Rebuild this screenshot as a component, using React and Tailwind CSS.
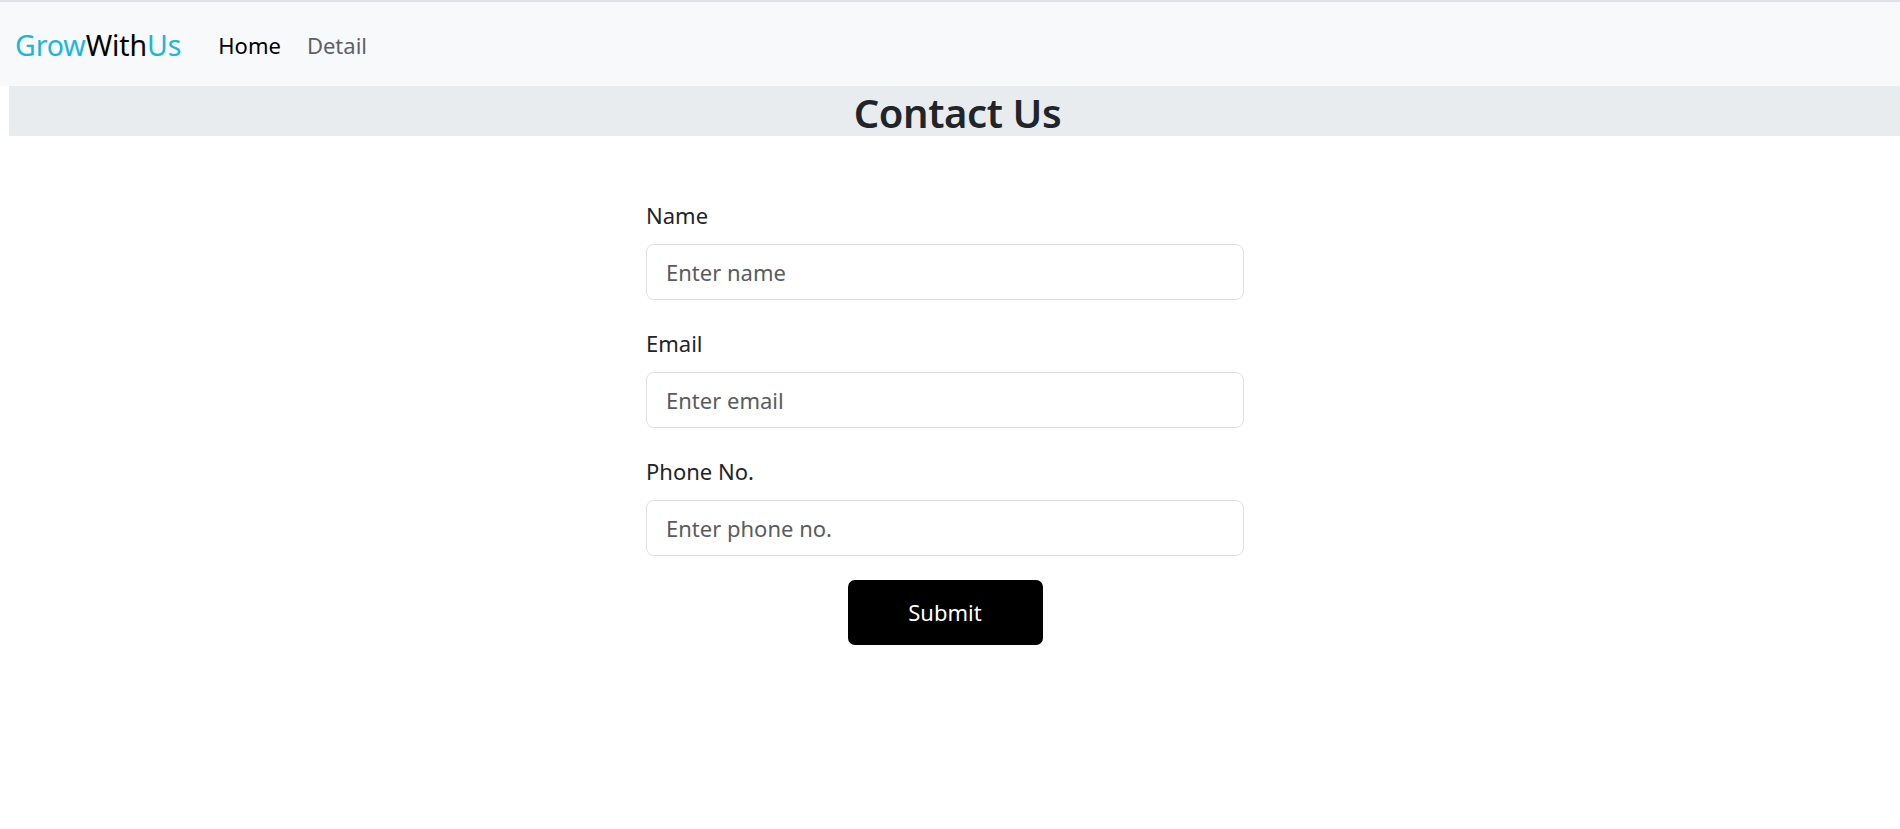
import React from 'react';

const fields = [
  { label: 'Name', placeholder: 'Enter name', type: 'text' },
  { label: 'Email', placeholder: 'Enter email', type: 'email' },
  { label: 'Phone No.', placeholder: 'Enter phone no.', type: 'tel' },
];

export default function App() {
  return (
    <div className="min-h-screen bg-white text-[#212529] font-['Noto_Sans',_'Open_Sans',_sans-serif]">
      <div className="h-[2px] bg-[#dee2e6]" />
      <nav className="h-[84px] bg-[#f8f9fa] flex items-center pl-[15px] pt-[2px]">
        <a href="#" className="text-[28.5px] leading-none tracking-[-0.1px]">
          <span className="text-[#21b5dd]">Grow</span>
          <span className="text-black">With</span>
          <span className="text-[#21b5dd]">Us</span>
        </a>
        <div className="flex items-center gap-[26px] ml-[37px] text-[22px]">
          <a href="#" className="text-black">Home</a>
          <a href="#" className="text-[#5c6166]">Detail</a>
        </div>
      </nav>

      <div className="ml-[9px] h-[50px] bg-[#e9ecef] flex items-center justify-center pt-[3px]">
        <h1 className="text-[40px] font-semibold leading-none tracking-[-0.4px] ml-[6px]">Contact Us</h1>
      </div>

      <div className="flex justify-center pr-[10px] pt-[64px]">
        <form className="w-[598px] flex flex-col" onSubmit={(e) => e.preventDefault()}>
          <div className="flex flex-col gap-[28px]">
            {fields.map((f, i) => (
              <div key={i} className="flex flex-col">
                <label className="text-[22px] leading-[30px] mb-[14px]">{f.label}</label>
                <input
                  type={f.type}
                  placeholder={f.placeholder}
                  className="h-[56px] w-full rounded-[8px] border border-[#dee2e6] bg-white px-[19px] text-[22px] placeholder-[#595c5f] focus:outline-none"
                />
              </div>
            ))}
          </div>
          <button
            type="submit"
            className="self-center mt-[24px] w-[195px] h-[65px] rounded-[7px] bg-black text-white text-[22px]"
          >
            Submit
          </button>
        </form>
      </div>
    </div>
  );
}
